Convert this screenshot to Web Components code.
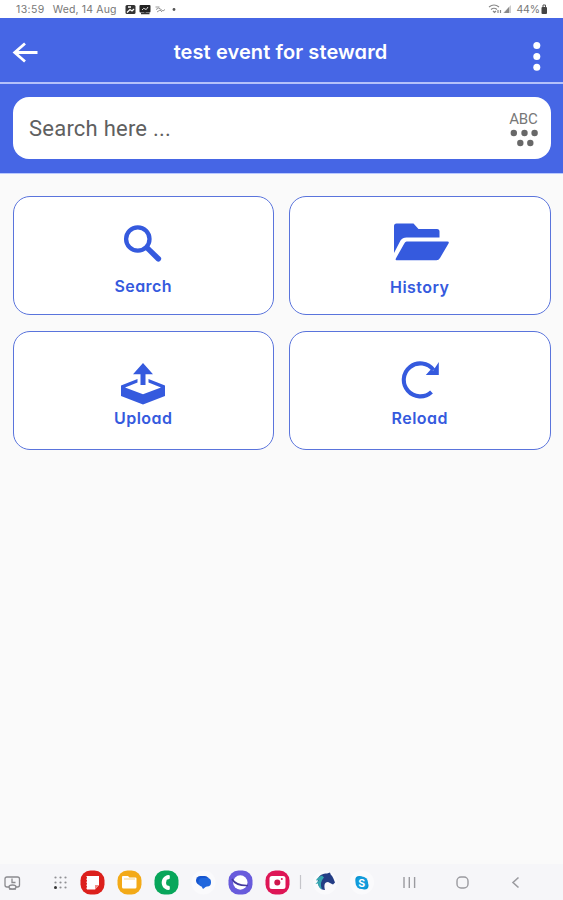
<!DOCTYPE html>
<html lang="en"><head><meta charset="utf-8"><title>test event for steward</title>
<style>
html,body{margin:0;height:100%}
body{background:#fafafa;font-family:Inter,"Noto Sans",sans-serif;font-feature-settings:"cv11";--brand:#4666e5;--ink:#355ade}
</style></head><body>
<event-app></event-app>
<script>
const define=(name,html)=>customElements.define(name,class extends HTMLElement{
  constructor(){super();const t=document.createElement('template');t.innerHTML=html;
    this.attachShadow({mode:'open'}).append(t.content.cloneNode(true));}
});
define('status-bar',`<style>
:host{display:flex;height:18px;box-sizing:border-box;background:#fff;color:#777;font-size:10.5px;line-height:19px;padding:0 15px 0 16px;white-space:nowrap}
.d{margin-left:8px;letter-spacing:.15px}.t{letter-spacing:.4px}.i{margin-left:8px}.r{margin-left:auto;margin-right:3px}
svg{display:block}.p{letter-spacing:-.1px}
</style><span class="t">13:59</span><span class="d">Wed, 14 Aug</span>
<svg class="i" width="54" height="18" viewBox="125 0 54 18"><rect x="125.500" y="5" width="10" height="9" rx="1.500" fill="#333"/><path d="M127 12.500l3-3 2 1.500 2-2M128 7h3" stroke="#fff" fill="none" stroke-width="1.300"/><rect x="139.500" y="5" width="11" height="7.500" rx="1" fill="#222"/><path d="M141 13.500h8.500M145 12v2" stroke="#333" stroke-width="1.500"/><path d="M142 10q2-3 3-1t3-2" stroke="#ddd" fill="none"/><path d="M155.500 7h4M156 9.500q3-3 5 0t4 0M157 12l3-2 2 2" stroke="#999" fill="none"/><circle cx="174" cy="9.500" r="1.400" fill="#555"/></svg>
<svg class="r" width="25" height="18" viewBox="489 0 25 18"><path d="M490 7q5-4 10 0M492 9.500q3-2.500 6 0M494 11l1.500 1.500 1.500-1.500M499 10v3M501.500 13v-3" stroke="#888" fill="none" stroke-width="1.200"/><path d="M504 13h8V5z" fill="#ccc"/><path d="M505 13h5V7z" fill="#888"/></svg>
<span class="p">44%</span><svg width="8" height="18" viewBox="0 0 8 18"><rect x="1.500" y="7" width="5.500" height="7" rx="1" fill="#444"/><path d="M3 7V5h2.500v2" stroke="#555" fill="none"/></svg>`);
define('top-bar',`<style>
:host{display:grid;grid-template-columns:50px 1fr 52px;height:63.500px;align-items:center;background:var(--brand);border-bottom:2.500px solid #b4c1fa;color:#fff}
h1{margin:0;padding-top:4px;font-size:20px;font-weight:600;line-height:28px;text-align:center;white-space:nowrap;letter-spacing:.1px}svg{display:block}
</style><svg width="50" height="63" viewBox="0 18 50 63"><path d="M37.500 52.500H14.500M25 43.500l-10.300 9 10.300 9" fill="none" stroke="#fff" stroke-width="2.800"/></svg>
<h1><slot></slot></h1><svg width="52" height="63" viewBox="511 18 52 63"><g fill="#fff"><circle cx="536.800" cy="45.500" r="3.500"/><circle cx="536.800" cy="56.500" r="3.500"/><circle cx="536.800" cy="67.200" r="3.500"/></g></svg>`);
define('search-field',`<style>
:host{display:block;background:var(--brand);padding:13.500px 12.500px 13.500px 13px;border-bottom:1px solid #b9c9ff;height:62px}
.b{box-sizing:border-box;height:62px;border-radius:16px;background:#fff;display:flex;align-items:center;justify-content:space-between;padding:2px 12px 0 16px}
.q{font:400 22px/30px Roboto,sans-serif;color:#606060;letter-spacing:.23px}
.k{display:flex;flex-direction:column;align-items:center;font:15px/16px Roboto,sans-serif;color:#777;letter-spacing:-.1px}svg{display:block}
</style><div class="b"><span class="q"><slot></slot></span><span class="k">ABC<svg width="30" height="20" viewBox="509 128 30 20"><g fill="#686868"><circle cx="513.800" cy="134" r="3.200"/><circle cx="524.500" cy="134" r="3.200"/><circle cx="534.600" cy="134" r="3.200"/><circle cx="520.300" cy="144" r="3.200"/><circle cx="530.300" cy="144" r="3.200"/></g></svg></span></div>`);
define('action-card',`<style>
:host{box-sizing:border-box;display:flex;flex-direction:column;align-items:center;border:1.300px solid #5a74dc;border-radius:17px;background:#fff;color:var(--ink);padding-top:var(--top,25px);font-size:16px;font-weight:600;line-height:22px}
.l{margin-top:var(--gap,9px);letter-spacing:.45px}
</style><slot name="icon"></slot><span class="l"><slot></slot></span>`);
define('dock-bar',`<style>:host{display:block;height:36px;background:#f6f6f9}svg{display:block}</style>
<svg width="563" height="36" viewBox="0 864 563 36">
<g fill="none" stroke="#8b8b8f" stroke-width="1.300"><rect x="5" y="877" width="14.500" height="10" rx="2"/><path d="M12 878.500v4h3.500M9 889h7"/><ellipse cx="12.500" cy="887" rx="3.500" ry="2" fill="#f6f6f9"/></g>
<g fill="#909094"><circle cx="55.500" cy="877.500" r="1.100"/><circle cx="60.500" cy="877.500" r="1.100"/><circle cx="65.500" cy="877.500" r="1.100"/><circle cx="55.500" cy="882.500" r="1.100"/><circle cx="60.500" cy="882.500" r="1.100"/><circle cx="65.500" cy="882.500" r="1.100"/><circle cx="55.500" cy="887.500" r="1.500" fill="#333"/><circle cx="60.500" cy="887.500" r="1.100"/><circle cx="65.500" cy="887.500" r="1.100"/></g>
<rect x="80.500" y="870.500" width="24" height="24" rx="10" fill="#dc201c"/><path d="M86.500 876h12.500v9l-4 4.500h-8.500z" fill="#fff"/><path d="M95 889.500v-4.500h4z" fill="#f28b86"/><path d="M86 877v13" stroke="#dc201c" stroke-width="1.800" stroke-dasharray="1.500 1.500"/>
<rect x="117.500" y="870.500" width="24" height="24" rx="10" fill="#f3aa18"/><path d="M122 877q0-1 1-1h5l1.500 1.500h6q1 0 1 1V887q0 1.500-1.500 1.500h-11.500q-1.500 0-1.500-1.500z" fill="#fff"/><path d="M124 879h11" stroke="#f7d486"/>
<rect x="154.500" y="870.500" width="24" height="24" rx="10" fill="#08a65b"/><path d="M168.500 875c-9 1-9 14 0 15 1.500 0 1.500-1 1.200-3.500-.3-1-2-.8-3-1.200q-1.200-2.800 0-5.600c1-.4 2.700-.2 3-1.200.3-2.500.3-3.500-1.200-3.500z" fill="#fff"/>
<circle cx="203.500" cy="882.500" r="12" fill="#fafafc"/><rect x="196" y="876" width="13" height="9" rx="4.500" fill="#1655cf"/><rect x="198.500" y="878" width="12.500" height="8.500" rx="4" fill="#2067dd"/><path d="M201 885.500h6.500l-4.500 3.500z" fill="#2067dd"/>
<rect x="228.500" y="870.500" width="24" height="24" rx="10" fill="#685bdc"/><circle cx="240.300" cy="882.500" r="7.200" fill="#fff"/><path d="M232 879q4 7 16 6.500" fill="none" stroke="#443a9e" stroke-width="1.600"/>
<rect x="265.500" y="870.500" width="24" height="24" rx="10" fill="#de1656"/><rect x="269.500" y="876" width="16" height="13" rx="2.500" fill="#fff"/><circle cx="277.300" cy="882.500" r="3" fill="#ce174c"/><circle cx="281.800" cy="879" r="1" fill="#de1656"/>
<path d="M300.500 875v14" stroke="#c5c5ca" stroke-width="1.200"/>
<circle cx="325" cy="882.500" r="12" fill="#fafafc"/><path d="M318 879c1-4 5-5.500 9-5.500l3-1 .7 2c2.500 2 3 5 4.300 8l-2 2-5-2.500c-4 0-4 4-3 8-5 0-8-5-7-11z" fill="#243d85"/><path d="M322 875.500c-3 1-5.500 3-6 5l3-.5-3.500 4 2.500-.5c0 3 2 5 4 6q-3-7 2-12z" fill="#35a6b0"/>
<circle cx="362" cy="882.500" r="12" fill="#fafafc"/><circle cx="359.300" cy="880" r="4" fill="#0794d2"/><circle cx="364.500" cy="885.500" r="4" fill="#0794d2"/><circle cx="361.800" cy="882.700" r="6.300" fill="#129bdb"/><text x="361.800" y="886.500" font-family="Inter,sans-serif" font-size="10.500" font-weight="700" text-anchor="middle" fill="#fff">S</text>
<g stroke="#9b9ba0" stroke-width="1.400" fill="none"><path d="M404 877v11M409.300 877v11M414.600 877v11"/><rect x="457" y="877" width="11" height="11" rx="4"/><path d="M518.500 877.500l-5.500 5 5.500 5" stroke-width="1.600"/></g></svg>`);
define('event-app',`<style>
:host{display:flex;flex-direction:column;height:100vh}
main{flex:1;display:grid;grid-template-columns:261.500px 261.500px;grid-auto-rows:119px;gap:16px 15px;padding:22px 12.500px}
svg{fill:var(--ink);display:block;flex:none}
.h{--gap:10px}.u{--top:29px;--gap:2px}
</style><status-bar></status-bar><top-bar>test event for steward</top-bar><search-field>Search here ...</search-field>
<main>
<action-card><svg slot="icon" width="60" height="44" viewBox="113.500 222 60 44"><circle cx="138.300" cy="239" r="11.700" fill="none" stroke="var(--ink)" stroke-width="4.300"/><path d="M145.500 249.500l4-3.500 11.500 11q1.600 1.800-.2 3.700-1.800 1.800-3.700.2z"/></svg>Search</action-card>
<action-card class="h"><svg slot="icon" width="60" height="44" viewBox="390.500 222 60 44"><path d="M394.500 253V226q0-2.500 2.500-2.500h17l5 5.500h18.500q2.500 0 2.500 2.500v6h-33q-4 0-6 3z"/><path d="M407 241.500h41q2 0 1 2l-8.500 14.500q-1.300 2.200-3.500 2.200h-40q-1.500 0-.5-2l8-14.200q1-2.500 2.500-2.500z"/></svg>History</action-card>
<action-card class="u"><svg slot="icon" width="60" height="44" viewBox="113.500 361 60 44"><path d="M143.500 363l10 11.300h-7.500V385h-5v-10.700h-7.500z"/><path d="M138 379l-16.500 6.500v10.500l22 8.500 22-8.500v-10.500l-16.500-6.500v3.500l12.500 5-18 6.700-18-6.700 12.500-5z"/></svg>Upload</action-card>
<action-card class="u"><svg slot="icon" width="60" height="44" viewBox="390 361 60 44"><path d="M431.500 392A16.500 16.500 0 1 1 433.500 370" fill="none" stroke="var(--ink)" stroke-width="4.100"/><path d="M438.800 362v13h-13l4.500-5 3 .500z"/></svg>Reload</action-card>
</main><dock-bar></dock-bar>`);
</script></body></html>
